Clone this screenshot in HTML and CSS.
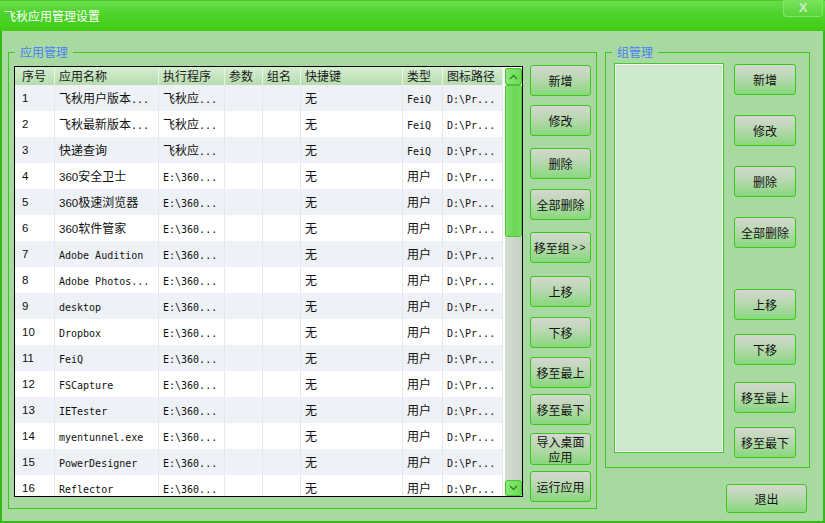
FILE: index.html
```html
<!DOCTYPE html>
<html lang="zh">
<head>
<meta charset="utf-8">
<title>飞秋应用管理设置</title>
<link rel="stylesheet" href="styles.css">
</head>
<body>
<div class="window">
  <div class="titlebar">
    <span class="title">飞秋应用管理设置</span>
    <span class="close">X</span>
  </div>
  <div class="content">
    <div class="group group-app">
      <span class="legend">应用管理</span>
      <div class="tablebox">
        <div class="grid">
          <div class="row head">
            <div class="c">序号</div><div class="c">应用名称</div><div class="c">执行程序</div><div class="c">参数</div><div class="c">组名</div><div class="c">快捷键</div><div class="c">类型</div><div class="c">图标路径</div>
          </div>
          <div class="row"><div class="c n">1</div><div class="c">飞秋用户版本<span class="en">...</span></div><div class="c">飞秋应<span class="en">...</span></div><div class="c"></div><div class="c"></div><div class="c">无</div><div class="c"><span class="en">FeiQ</span></div><div class="c"><span class="en">D:\Pr...</span></div></div>
          <div class="row"><div class="c n">2</div><div class="c">飞秋最新版本<span class="en">...</span></div><div class="c">飞秋应<span class="en">...</span></div><div class="c"></div><div class="c"></div><div class="c">无</div><div class="c"><span class="en">FeiQ</span></div><div class="c"><span class="en">D:\Pr...</span></div></div>
          <div class="row"><div class="c n">3</div><div class="c">快递查询</div><div class="c">飞秋应<span class="en">...</span></div><div class="c"></div><div class="c"></div><div class="c">无</div><div class="c"><span class="en">FeiQ</span></div><div class="c"><span class="en">D:\Pr...</span></div></div>
          <div class="row"><div class="c n">4</div><div class="c"><span class="num">360</span>安全卫士</div><div class="c"><span class="en">E:\360...</span></div><div class="c"></div><div class="c"></div><div class="c">无</div><div class="c">用户</div><div class="c"><span class="en">D:\Pr...</span></div></div>
          <div class="row"><div class="c n">5</div><div class="c"><span class="num">360</span>极速浏览器</div><div class="c"><span class="en">E:\360...</span></div><div class="c"></div><div class="c"></div><div class="c">无</div><div class="c">用户</div><div class="c"><span class="en">D:\Pr...</span></div></div>
          <div class="row"><div class="c n">6</div><div class="c"><span class="num">360</span>软件管家</div><div class="c"><span class="en">E:\360...</span></div><div class="c"></div><div class="c"></div><div class="c">无</div><div class="c">用户</div><div class="c"><span class="en">D:\Pr...</span></div></div>
          <div class="row"><div class="c n">7</div><div class="c"><span class="en">Adobe Audition</span></div><div class="c"><span class="en">E:\360...</span></div><div class="c"></div><div class="c"></div><div class="c">无</div><div class="c">用户</div><div class="c"><span class="en">D:\Pr...</span></div></div>
          <div class="row"><div class="c n">8</div><div class="c"><span class="en">Adobe Photos...</span></div><div class="c"><span class="en">E:\360...</span></div><div class="c"></div><div class="c"></div><div class="c">无</div><div class="c">用户</div><div class="c"><span class="en">D:\Pr...</span></div></div>
          <div class="row"><div class="c n">9</div><div class="c"><span class="en">desktop</span></div><div class="c"><span class="en">E:\360...</span></div><div class="c"></div><div class="c"></div><div class="c">无</div><div class="c">用户</div><div class="c"><span class="en">D:\Pr...</span></div></div>
          <div class="row"><div class="c n">10</div><div class="c"><span class="en">Dropbox</span></div><div class="c"><span class="en">E:\360...</span></div><div class="c"></div><div class="c"></div><div class="c">无</div><div class="c">用户</div><div class="c"><span class="en">D:\Pr...</span></div></div>
          <div class="row"><div class="c n">11</div><div class="c"><span class="en">FeiQ</span></div><div class="c"><span class="en">E:\360...</span></div><div class="c"></div><div class="c"></div><div class="c">无</div><div class="c">用户</div><div class="c"><span class="en">D:\Pr...</span></div></div>
          <div class="row"><div class="c n">12</div><div class="c"><span class="en">FSCapture</span></div><div class="c"><span class="en">E:\360...</span></div><div class="c"></div><div class="c"></div><div class="c">无</div><div class="c">用户</div><div class="c"><span class="en">D:\Pr...</span></div></div>
          <div class="row"><div class="c n">13</div><div class="c"><span class="en">IETester</span></div><div class="c"><span class="en">E:\360...</span></div><div class="c"></div><div class="c"></div><div class="c">无</div><div class="c">用户</div><div class="c"><span class="en">D:\Pr...</span></div></div>
          <div class="row"><div class="c n">14</div><div class="c"><span class="en">myentunnel.exe</span></div><div class="c"><span class="en">E:\360...</span></div><div class="c"></div><div class="c"></div><div class="c">无</div><div class="c">用户</div><div class="c"><span class="en">D:\Pr...</span></div></div>
          <div class="row"><div class="c n">15</div><div class="c"><span class="en">PowerDesigner</span></div><div class="c"><span class="en">E:\360...</span></div><div class="c"></div><div class="c"></div><div class="c">无</div><div class="c">用户</div><div class="c"><span class="en">D:\Pr...</span></div></div>
          <div class="row"><div class="c n">16</div><div class="c"><span class="en">Reflector</span></div><div class="c"><span class="en">E:\360...</span></div><div class="c"></div><div class="c"></div><div class="c">无</div><div class="c">用户</div><div class="c"><span class="en">D:\Pr...</span></div></div>
        </div>
        <div class="scrollbar">
          <div class="sb-btn up"><svg width="9" height="6" viewBox="0 0 9 6"><polyline points="1,5 4.5,1.5 8,5" fill="none" stroke="#1f8f18" stroke-width="1.4"/></svg></div>
          <div class="thumb"></div>
          <div class="track"></div>
          <div class="sb-btn down"><svg width="9" height="6" viewBox="0 0 9 6"><polyline points="1,1 4.5,4.5 8,1" fill="none" stroke="#1f8f18" stroke-width="1.4"/></svg></div>
        </div>
      </div>
      <div class="btncol left">
        <div class="btn">新增</div>
        <div class="btn">修改</div>
        <div class="btn">删除</div>
        <div class="btn">全部删除</div>
        <div class="btn">移至组<span class="gt">&gt;&gt;</span></div>
        <div class="btn">上移</div>
        <div class="btn">下移</div>
        <div class="btn">移至最上</div>
        <div class="btn">移至最下</div>
        <div class="btn two">导入桌面应用</div>
        <div class="btn">运行应用</div>
      </div>
    </div>
    <div class="rightcol">
      <div class="group group-grp">
        <span class="legend">组管理</span>
        <div class="listbox"></div>
        <div class="btncol right">
          <div class="btn">新增</div>
          <div class="btn">修改</div>
          <div class="btn">删除</div>
          <div class="btn">全部删除</div>
          <div class="btn">上移</div>
          <div class="btn">下移</div>
          <div class="btn">移至最上</div>
          <div class="btn">移至最下</div>
        </div>
      </div>
      <div class="btn exit">退出</div>
    </div>
  </div>
</div>
</body>
</html>
```

FILE: styles.css
```css
* { box-sizing: border-box; }

body {
  margin: 0;
  background: #a8d9a1;
  font-family: "Noto Sans CJK SC", sans-serif;
}

.window {
  width: 825px;
  height: 523px;
  border: 2px solid #36b816;
  border-top: 0;
  background: #a8d9a1;
  display: flex;
  flex-direction: column;
}

.titlebar {
  height: 31px;
  flex: none;
  margin: 0 -2px;
  padding: 0 2px 0 4px;
  background: linear-gradient(#6ade4c 0%, #52d430 35%, #40cc12 100%);
  border-top: 1px solid #4cc82a;
  display: flex;
  justify-content: space-between;
  align-items: flex-start;
}

.title {
  color: #ffffff;
  font-size: 12px;
  line-height: 29px;
}

.close {
  width: 40px;
  height: 17px;
  margin-top: -1px;
  border: 1px solid #86e46a;
  border-top: 0;
  border-radius: 0 0 4px 4px;
  background: linear-gradient(#7ae25c, #58d438);
  color: #cde8c6;
  font: bold 13px/16px "Liberation Sans", sans-serif;
  text-align: center;
}

.content {
  flex: 1;
  display: flex;
  padding: 21px 0 0 6px;
  gap: 8px;
}

.group {
  position: relative;
  border: 1px solid #3cc81e;
  display: flex;
}

.legend {
  position: absolute;
  top: -9px;
  left: 6px;
  padding: 0 5px 0 5px;
  background: #a8d9a1;
  color: #4a7ff6;
  font-size: 12px;
  line-height: 16px;
}

.group-app {
  width: 589px;
  height: 457px;
  padding: 12px 5px 0 5px;
  gap: 7px;
  align-items: flex-start;
}

.tablebox {
  width: 509px;
  height: 431px;
  margin-top: 1px;
  border: 1px solid #000;
  background: #fff;
  display: flex;
  overflow: hidden;
}

.grid {
  width: 488px;
  flex: none;
  overflow: hidden;
}

.row {
  display: grid;
  grid-template-columns: 40px 104px 66px 38px 38px 102px 40px 60px;
  height: 26px;
  background: #ffffff;
}

.row:nth-child(even) { background: #eef1f5; }

.row.head {
  height: 18px;
  background: linear-gradient(#d6eed2, #b6dcae);
}

.c {
  border-right: 1px solid #e4e8ec;
  padding-left: 4px;
  font-size: 12px;
  line-height: 26px;
  color: #101010;
  white-space: nowrap;
  overflow: hidden;
}

.c:first-child { padding-left: 7px; }

.head .c {
  line-height: 18px;
  border-right: 1px solid #e8f6e6;
  color: #1a1a1a;
}

.n {
  font-family: "Liberation Sans", sans-serif;
  font-size: 11.5px;
}

.en {
  font-family: "DejaVu Sans Mono", monospace;
  font-size: 10px;
}

.num {
  font-family: "Liberation Sans", sans-serif;
  font-size: 11.5px;
}

.scrollbar {
  width: 19px;
  flex: none;
  padding: 1px 0 0 2px;
  display: flex;
  flex-direction: column;
  background: #fff;
}

.sb-btn {
  width: 17px;
  height: 17px;
  flex: none;
  border: 1px solid #44c828;
  border-radius: 2px;
  background: linear-gradient(90deg, #8ce67a, #6cd858);
  display: flex;
  align-items: center;
  justify-content: center;
}

.sb-btn.down { height: 16px; }

.thumb {
  width: 17px;
  height: 152px;
  flex: none;
  border: 1px solid #4cc834;
  border-radius: 2px;
  background: linear-gradient(90deg, #82e06e, #6cd856 60%, #78dc64);
}

.track {
  flex: 1;
  width: 17px;
  background: linear-gradient(90deg, #d4dcd2, #c4d2c2);
}

.btncol {
  display: flex;
  flex-direction: column;
}

.btn {
  width: 61px;
  height: 31px;
  flex: none;
  border: 1px solid #38c818;
  border-radius: 3px;
  background: linear-gradient(#d4d8d0 0%, #b4d8ac 50%, #88d87c 100%);
  color: #111;
  font-size: 12px;
  line-height: 15px;
  display: flex;
  align-items: center;
  justify-content: center;
  text-align: center;
}

.btn.two {
  height: 32px;
  padding: 0 4px;
}

.gt {
  font-family: "Liberation Sans", sans-serif;
  font-size: 10px;
  letter-spacing: 2px;
  margin-left: 2px;
}

.btncol.left .btn:nth-child(2) { margin-top: 9px; }
.btncol.left .btn:nth-child(3) { margin-top: 12px; }
.btncol.left .btn:nth-child(4) { margin-top: 10px; }
.btncol.left .btn:nth-child(5) { margin-top: 12px; }
.btncol.left .btn:nth-child(6) { margin-top: 13px; }
.btncol.left .btn:nth-child(7) { margin-top: 10px; }
.btncol.left .btn:nth-child(8) { margin-top: 9px; }
.btncol.left .btn:nth-child(9) { margin-top: 6px; }
.btncol.left .btn:nth-child(10) { margin-top: 8px; }
.btncol.left .btn:nth-child(11) { margin-top: 6px; }

.rightcol {
  width: 205px;
  display: flex;
  flex-direction: column;
}

.group-grp {
  height: 416px;
  padding: 10px 13px 0 8px;
  gap: 10px;
  align-items: flex-start;
}

.listbox {
  width: 110px;
  height: 390px;
  border: 1px solid #48c830;
  box-shadow: inset 0 0 0 1px #f4fff2;
  background: #cde8cd;
}

.btncol.right { padding-top: 1px; }
.btncol.right .btn { width: 62px; }
.btncol.right .btn:nth-child(n+2) { margin-top: 20px; }
.btncol.right .btn:nth-child(5) { margin-top: 41px; }
.btncol.right .btn:nth-child(6) { margin-top: 14px; }
.btncol.right .btn:nth-child(7) { margin-top: 17px; }
.btncol.right .btn:nth-child(8) { margin-top: 14px; }

.btn.exit {
  width: 81px;
  height: 29px;
  margin-top: 16px;
  margin-right: 3px;
  align-self: flex-end;
}
```
